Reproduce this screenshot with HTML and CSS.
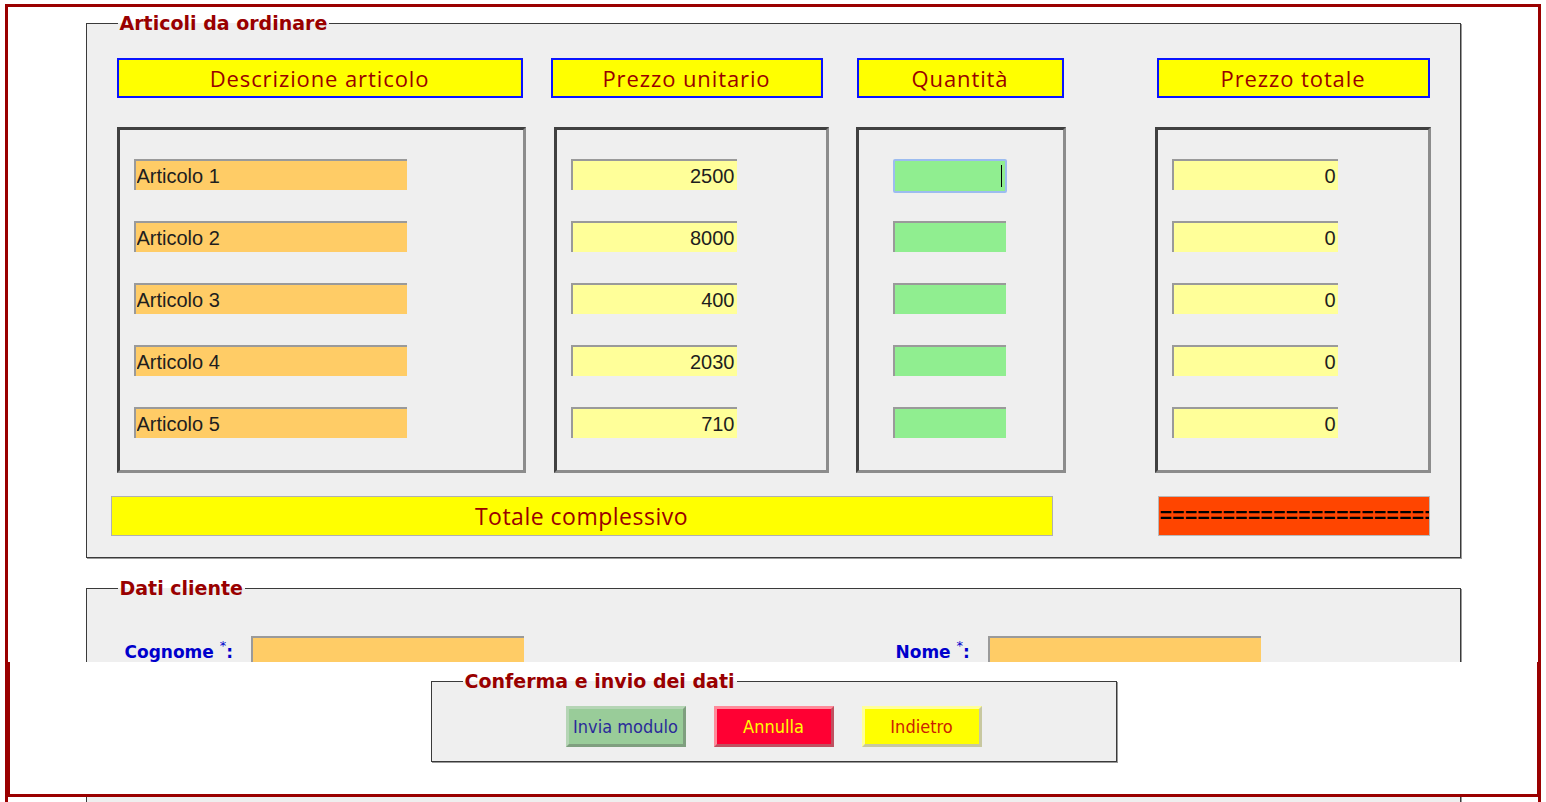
FILE: index.html
```html
<!DOCTYPE html>
<html lang="it">
<head>
<meta charset="utf-8">
<title>Modulo d'ordine</title>
<link rel="stylesheet" href="styles.css">
</head>
<body>
<div class="page">
  <fieldset class="box-articoli">
    <legend>Articoli da ordinare</legend>
    <div class="cols">
      <div class="col col1">
        <div class="head">Descrizione articolo</div>
        <div class="well">
          <input class="fld desc" type="text" value="Articolo 1">
          <input class="fld desc" type="text" value="Articolo 2">
          <input class="fld desc" type="text" value="Articolo 3">
          <input class="fld desc" type="text" value="Articolo 4">
          <input class="fld desc" type="text" value="Articolo 5">
        </div>
      </div>
      <div class="col col2">
        <div class="head">Prezzo unitario</div>
        <div class="well">
          <input class="fld price" type="text" value="2500">
          <input class="fld price" type="text" value="8000">
          <input class="fld price" type="text" value="400">
          <input class="fld price" type="text" value="2030">
          <input class="fld price" type="text" value="710">
        </div>
      </div>
      <div class="col col3">
        <div class="head">Quantità</div>
        <div class="well">
          <div class="qwrap"><input class="fld qty focus" type="text" value=""><span class="caret"></span></div>
          <div class="qwrap"><input class="fld qty" type="text" value=""></div>
          <div class="qwrap"><input class="fld qty" type="text" value=""></div>
          <div class="qwrap"><input class="fld qty" type="text" value=""></div>
          <div class="qwrap"><input class="fld qty" type="text" value=""></div>
        </div>
      </div>
      <div class="col col4">
        <div class="head">Prezzo totale</div>
        <div class="well">
          <input class="fld price tot" type="text" value="0">
          <input class="fld price tot" type="text" value="0">
          <input class="fld price tot" type="text" value="0">
          <input class="fld price tot" type="text" value="0">
          <input class="fld price tot" type="text" value="0">
        </div>
      </div>
    </div>
    <div class="totrow">
      <div class="totlabel">Totale complessivo</div>
      <input class="totvalue" type="text" value="========================">
    </div>
  </fieldset>

  <fieldset class="box-cliente">
    <legend>Dati cliente</legend>
    <div class="crow">
      <div class="cfield cf1">
        <label class="clabel l1">Cognome <sup>*</sup>:</label>
        <input class="cinput" type="text">
      </div>
      <div class="cfield cf2">
        <label class="clabel l2">Nome <sup>*</sup>:</label>
        <input class="cinput" type="text">
      </div>
    </div>
  </fieldset>
</div>

<div class="footer">
  <fieldset class="box-invio">
    <legend>Conferma e invio dei dati</legend>
    <div class="btns">
      <button class="btn b-invia" type="button">Invia modulo</button>
      <button class="btn b-annulla" type="button">Annulla</button>
      <button class="btn b-indietro" type="button">Indietro</button>
    </div>
  </fieldset>
</div>
</body>
</html>
```
FILE: styles.css
```css
html, body {
  margin: 0;
  padding: 0;
  background: #ffffff;
}
body {
  font-family: "DejaVu Sans", sans-serif;
}
.page {
  margin: 4px 5px 0 5px;
  border: 3px solid #9a0000;
  padding-bottom: 40px;
  min-height: 1000px;
}
fieldset {
  box-sizing: border-box;
  width: 1375px;
  margin: 0 auto;
  background: #efefef;
  border: 1px solid #3a3a3a;
  box-shadow: 1px 1px 0 #9a9a9a;
  padding: 0;
}
legend {
  margin-left: 31px;
  padding: 0 2px;
  font-family: "DejaVu Sans", sans-serif;
  font-weight: bold;
  font-size: 19px;
  line-height: 22px;
  color: #990000;
}
.box-articoli {
  margin-top: 5px;
  padding: 24px 0 21px 0;
}
.cols {
  display: flex;
  align-items: flex-start;
  padding-left: 30px;
}
.col {
  display: flex;
  flex-direction: column;
}
.head {
  box-sizing: border-box;
  height: 40px;
  border: 2px solid #0a14ff;
  background: #ffff00;
  color: #990000;
  font-family: "Open Sans", sans-serif;
  font-size: 22px;
  letter-spacing: 0.9px;
  line-height: 36px;
  text-align: center;
}
.well {
  box-sizing: border-box;
  margin-top: 29px;
  height: 346px;
  border: 3px solid;
  border-color: #404040 #8c8c8c #8c8c8c #404040;
  padding: 29px 0 0 14px;
  display: flex;
  flex-direction: column;
  gap: 31px;
}
.col1 { width: 409px; }
.col1 .head { width: 406px; }
.col2 { width: 278px; margin-left: 25px; }
.col2 .head { width: 272px; }
.col2 .well { margin-left: 3px; width: 275px; }
.col3 { width: 210px; margin-left: 27px; }
.col3 .head { width: 207px; margin-left: 1px; }
.col3 .well { padding-left: 34px; }
.col4 { width: 276px; margin-left: 89px; }
.col4 .head { width: 273px; margin-left: 2px; }

.fld {
  display: block;
  box-sizing: border-box;
  height: 31px;
  margin: 0;
  border: 0;
  border-top: 2px solid #9a9a9a;
  border-left: 2px solid #9a9a9a;
  padding: 2px 2px 0 1px;
  font-family: "Liberation Sans", Arial, sans-serif;
  font-size: 20px;
  color: #1e1e1e;
  outline: none;
}
.desc {
  width: 273px;
  background: #ffcc66;
}
.price {
  width: 166px;
  background: #ffff99;
  text-align: right;
}
.qty {
  width: 113px;
  background: #90ee90;
  text-align: right;
}
.qwrap {
  position: relative;
  width: 113px;
  height: 31px;
}
.qty.focus {
  border: 2px solid #9cbcf0;
  border-radius: 2px;
  width: 114px;
  height: 34px;
}
.caret {
  position: absolute;
  left: 108px;
  top: 6px;
  width: 1px;
  height: 22px;
  background: #000;
}
.totrow {
  display: flex;
  align-items: flex-start;
  margin-top: 23px;
  padding-left: 24px;
}
.totlabel {
  box-sizing: border-box;
  width: 942px;
  height: 40px;
  border: 1px solid #b0b0b0;
  background: #ffff00;
  color: #990000;
  font-family: "Open Sans", sans-serif;
  font-size: 23px;
  letter-spacing: 0.5px;
  line-height: 38px;
  text-align: center;
}
.totvalue {
  box-sizing: border-box;
  width: 272px;
  height: 40px;
  margin: 0 0 0 105px;
  border: 1px solid #b8b8b8;
  background: #ff4500;
  color: #000;
  padding: 0 0 0 1px;
  font-family: "Liberation Mono", monospace;
  font-weight: bold;
  font-size: 21px;
  outline: none;
}
.box-cliente {
  margin-top: 19px;
  padding: 37px 0 40px 0;
  min-height: 400px;
}
.crow {
  display: flex;
  align-items: center;
  padding-left: 38px;
}
.cfield {
  display: flex;
  align-items: center;
}
.cf1 { width: 771px; }
.clabel {
  font-family: "DejaVu Sans", sans-serif;
  font-weight: bold;
  font-size: 17px;
  color: #0000cc;
  padding-top: 0;
}
.clabel sup {
  font-size: 13px;
  font-weight: normal;
  vertical-align: 8px;
  line-height: 0;
}
.l1 { width: 126px; }
.l2 { width: 92px; }
.cinput {
  box-sizing: border-box;
  width: 273px;
  height: 31px;
  margin: 0;
  border: 0;
  border-top: 2px solid #9a9a9a;
  border-left: 2px solid #9a9a9a;
  background: #ffcc66;
}
.footer {
  position: fixed;
  left: 7px;
  right: 6px;
  bottom: 5px;
  height: 135px;
  box-sizing: border-box;
  background: #ffffff;
  border: 3px solid #9a0000;
  border-top: 0;
  padding-top: 8px;
}
.box-invio {
  width: 686px;
  padding: 14px 0 14px 0;
}
.box-invio legend {
  margin-left: 31px;
}
.btns {
  display: flex;
  justify-content: center;
  gap: 28px;
}
.btn {
  box-sizing: border-box;
  width: 120px;
  height: 41px;
  margin: 0;
  padding: 0;
  font-family: "DejaVu Sans Condensed", "DejaVu Sans", sans-serif;
  font-stretch: condensed;
  font-size: 18px;
  border: 3px solid;
}
.b-invia {
  background: #99cc99;
  color: #2a2a99;
  border-color: #b5d5b5 #7f9f7f #7f9f7f #b5d5b5;
}
.b-annulla {
  background: #ff0033;
  color: #ffff00;
  border-color: #ff8a9a #c05060 #c05060 #ff8a9a;
}
.b-indietro {
  background: #ffff00;
  color: #cc2200;
  border-color: #ffff99 #c8c8a0 #c8c8a0 #ffff99;
}
```
